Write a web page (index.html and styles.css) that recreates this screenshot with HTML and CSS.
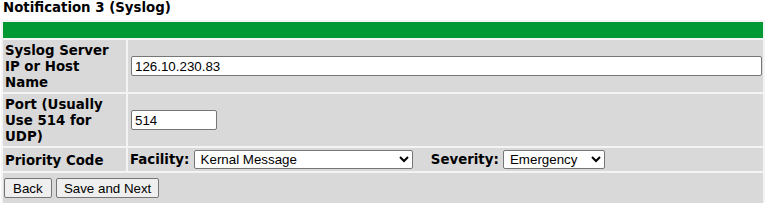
FILE: index.html
```html
<!DOCTYPE html>
<html>
<head>
<meta charset="utf-8">
<link rel="stylesheet" href="styles.css">
</head>
<body>
<div class="page">
  <div class="title">Notification 3 (Syslog)</div>
  <table class="form">
    <tr><td colspan="2" class="bar"></td></tr>
    <tr>
      <td class="label">Syslog Server IP or Host Name</td>
      <td class="field"><input type="text" class="wide" value="126.10.230.83"></td>
    </tr>
    <tr>
      <td class="label">Port (Usually Use 514 for UDP)</td>
      <td class="field"><input type="text" class="port" value="514"></td>
    </tr>
    <tr>
      <td class="label">Priority Code</td>
      <td class="field prio">
        <span class="lbl">Facility:</span>
        <select class="facility"><option>Kernal Message</option></select>
        <span class="lbl sev">Severity:</span>
        <select class="severity"><option>Emergency</option></select>
      </td>
    </tr>
    <tr>
      <td colspan="2" class="buttons">
        <button class="btn back">Back</button>
        <button class="btn">Save and Next</button>
      </td>
    </tr>
  </table>
</div>
</body>
</html>
```
FILE: styles.css
```css
html, body {
  margin: 0;
  padding: 0;
  background: #ffffff;
}
.page {
  padding: 0 1px;
  font-family: "DejaVu Sans", Verdana, sans-serif;
  font-size: 13.33px;
  color: #000;
}
.title {
  font-weight: bold;
  padding-left: 2px;
  line-height: 16px;
  height: 20px;
}
.form {
  width: 100%;
  border-collapse: separate;
  border-spacing: 2px;
  background: #f4f4f4;
}
.form td {
  background: #d9d9d9;
  padding: 0 2px;
  vertical-align: middle;
}
.form td.bar {
  background: #009933;
  height: 16px;
  padding: 0;
}
.form td.label {
  width: 119px;
  font-weight: bold;
  line-height: 16px;
  padding: 3px 2px 1px 2px;
}
.form td.field {
  padding: 2px 1px 2px 3px;
  line-height: 16px;
}
.field input {
  display: block;
  font-family: "Liberation Sans", Arial, sans-serif;
  font-size: 13.33px;
  border: 1px solid #767676;
  border-radius: 2px;
  padding: 1px 3px;
  height: 20px;
  box-sizing: border-box;
  margin: 0;
  background: #fff;
  color: #000;
}
.wide {
  width: 100%;
}
.port {
  width: 86px;
}
.form td.prio {
  height: 19px;
  padding-left: 2px;
  white-space: nowrap;
}
.prio .lbl {
  font-weight: bold;
}
.sev {
  margin-left: 14px;
}
select {
  font-family: "Liberation Sans", Arial, sans-serif;
  font-size: 13.33px;
  height: 19px;
  border: 1px solid #767676;
  border-radius: 2px;
  background: #fff;
  color: #000;
  padding: 0 0 0 2px;
  margin: 0;
  vertical-align: middle;
}
.facility { width: 219px; }
.severity { width: 102px; }
.form td.buttons {
  padding: 5px 1px 5px 1px;
}
.btn {
  display: inline-block;
  vertical-align: top;
  font-family: "Liberation Sans", Arial, sans-serif;
  font-size: 13.33px;
  height: 20px;
  padding: 0 7px;
  border: 1px solid #767676;
  border-radius: 2px;
  background: #efefef;
  color: #000;
  margin: 0;
}
.back {
  padding: 0 8px;
}
```
